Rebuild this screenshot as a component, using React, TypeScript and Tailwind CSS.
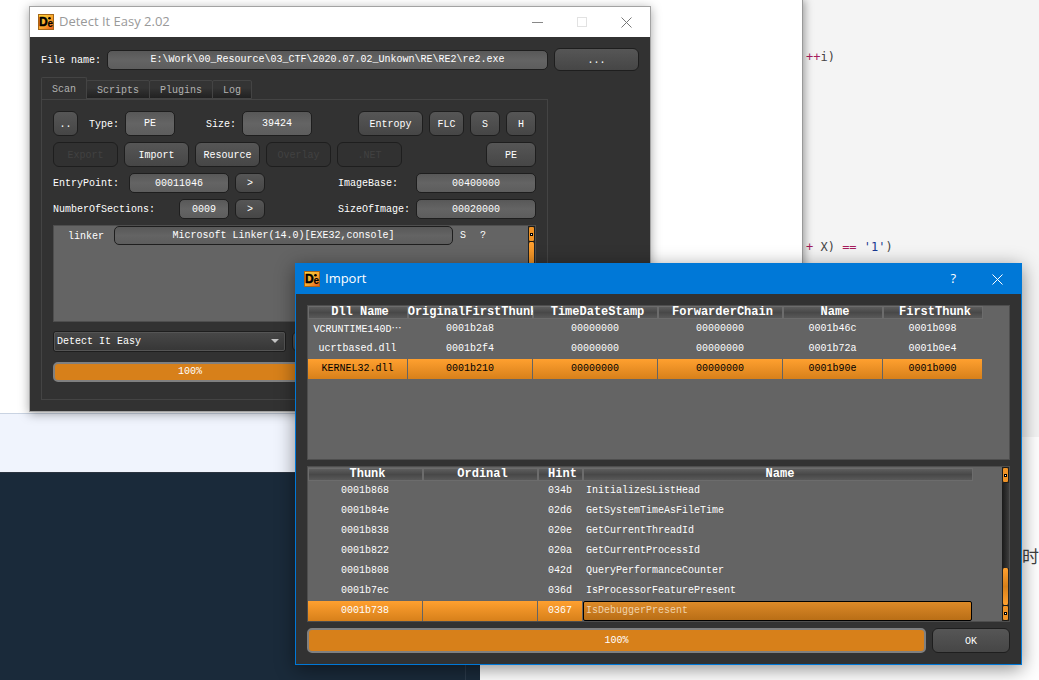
import React, { useState } from "react";
import { clsx } from "clsx";

const MONO = "font-['Liberation_Mono','Noto_Sans_CJK_SC',monospace]";
const SANS = "font-['Open_Sans','Noto_Sans',sans-serif]";

function Logo() {
  return (
    <svg width="16" height="16" viewBox="0 0 16 16" aria-hidden="true" className="shrink-0">
      <defs>
        <linearGradient id="logo-fill" x1="0" y1="0" x2="1" y2="1">
          <stop offset="0" stopColor="#ffd83a" />
          <stop offset="0.55" stopColor="#f9a62c" />
          <stop offset="1" stopColor="#e8551c" />
        </linearGradient>
      </defs>
      <rect x="0.5" y="0.5" width="15" height="15" fill="url(#logo-fill)" stroke="#a5671a" />
      <text x="0.9" y="12.4" fontFamily="Liberation Sans" fontWeight="700" fontSize="12" stroke="#000" strokeWidth="0.5">D</text>
      <text x="9.4" y="13.2" fontFamily="Liberation Sans" fontWeight="700" fontSize="10" stroke="#000" strokeWidth="0.1">e</text>
      <circle cx="11.5" cy="4.2" r="1.3" />
    </svg>
  );
}

function CloseGlyph({ className }: { className: string }) {
  return (
    <svg width="11" height="11" viewBox="0 0 11 11" className={className} aria-hidden="true">
      <path d="M0.5 0.5 10.5 10.5M10.5 0.5 0.5 10.5" stroke="currentColor" fill="none" />
    </svg>
  );
}

function Button({ className, children, ...rest }: React.ButtonHTMLAttributes<HTMLButtonElement>) {
  return (
    <button
      type="button"
      {...rest}
      className={clsx(
        "shrink-0 rounded-md border border-[#1e1e1e] pt-0.5 text-center whitespace-nowrap",
        rest.disabled ? "bg-[#313131] text-[#414141]" : "bg-linear-to-b from-[#565656] to-[#464646] text-white",
        className,
      )}
    >
      {children}
    </button>
  );
}

function Field({ id, label, value, labelClass, className }: { id: string; label: string; value: string; labelClass?: string; className: string }) {
  return (
    <>
      <label htmlFor={id} className={clsx("shrink-0 pt-0.5 whitespace-nowrap", labelClass)}>
        {label}
      </label>
      <input
        id={id}
        readOnly
        value={value}
        className={clsx(
          "min-w-0 rounded-[5px] border border-[#1e1e1e] bg-linear-to-b from-[#585858] via-[#646464] to-[#5d5d5d] text-center text-white outline-none",
          className,
        )}
      />
    </>
  );
}

function ScrollCap() {
  return (
    <button type="button" aria-label="Scroll" className="flex h-4 w-full shrink-0 items-center justify-center rounded-xs border border-[#1b1b19] bg-[#ef9226]">
      <span className="size-[3px] border border-black bg-white" />
    </button>
  );
}

function ScrollBar({ atEnd }: { atEnd?: boolean }) {
  return (
    <div className="flex w-[7px] shrink-0 flex-col bg-[#222222]">
      <ScrollCap />
      {atEnd && <div className="flex-1 bg-linear-to-r from-[#1a1a1a] to-[#3c3c3c]" />}
      <div
        className={clsx(
          "rounded-xs border-x border-[#222222] bg-linear-to-b from-[#ffa02f] via-[#d7801a] to-[#ffa02f]",
          atEnd ? "h-[37px]" : "flex-1",
        )}
      />
      <ScrollCap />
    </div>
  );
}

function Progress({ className }: { className: string }) {
  return (
    <div
      role="progressbar"
      aria-label="Progress"
      aria-valuenow={100}
      className={clsx("flex min-w-0 items-center justify-center rounded-[5px] border-2 border-[#808080] bg-[#d7801a] text-white", className)}
    >
      100%
    </div>
  );
}

const TABS = ["Scan", "Scripts", "Plugins", "Log"];

function MainWindow() {
  const [tab, setTab] = useState("Scan");
  return (
    <section className="absolute top-[6px] left-[29px] w-[622px] border border-[#a3a3a3] bg-[#323232] shadow-[0_2px_10px_rgba(0,0,0,0.35)]">
      <header className={clsx("flex h-[30px] items-center bg-white pr-[18px] pl-2 text-[13px] text-[#999999]", SANS)}>
        <Logo />
        <h1 className="ml-[5px] flex-1">Detect It Easy 2.02</h1>
        <div className="flex items-center gap-[34px]">
          <button type="button" aria-label="Minimize" className="flex size-[11px] items-center">
            <span className="h-px w-full bg-[#888888]" />
          </button>
          <button type="button" aria-label="Maximize" disabled className="size-[10px] border border-[#e2e2e2]" />
          <button type="button" aria-label="Close" className="size-[11px]">
            <CloseGlyph className="text-[#777777]" />
          </button>
        </div>
      </header>

      <div className={clsx("px-[11px] pt-[11px] pb-[11px] text-[10px] leading-3 text-white", MONO)}>
        <div className="flex items-center">
          <Field
            id="file"
            label="File name:"
            value={"E:\\Work\\00_Resource\\03_CTF\\2020.07.02_Unkown\\RE\\RE2\\re2.exe"}
            labelClass="w-[66px]"
            className="h-5 flex-1"
          />
          <Button className="ml-[6px] h-[23px] w-[85px]">...</Button>
        </div>

        <div role="tablist" className="mt-[6px] flex items-end text-[#b1b1b1]">
          {TABS.map((name) => (
            <button
              key={name}
              type="button"
              role="tab"
              aria-selected={tab === name}
              onClick={() => setTab(name)}
              className={clsx(
                "rounded-t-xs border border-[#444444] px-[10px] pt-0.5",
                tab === name ? "h-[22px] border-b-0 bg-[#323232]" : "-ml-px h-[19px] bg-linear-to-b from-[#343434] from-40% to-[#212121]",
              )}
            >
              {name}
            </button>
          ))}
        </div>

        <div className="mr-[91px] flex flex-col gap-[6px] border border-[#444444] px-[11px] pt-[11px] pb-[17px]">
          <div className="flex items-center">
            <Button className="h-[25px] w-[25px]">..</Button>
            <Field id="type" label="Type:" value="PE" labelClass="ml-[11px] w-9" className="h-[25px] w-[50px]" />
            <Field id="size" label="Size:" value="39424" labelClass="ml-[31px] w-9" className="h-[25px] w-[70px]" />
            <div className="ml-auto flex gap-[6px]">
              <Button className="h-[25px] w-[65px]">Entropy</Button>
              <Button className="h-[25px] w-[35px]">FLC</Button>
              <Button className="h-[25px] w-[30px]">S</Button>
              <Button className="h-[25px] w-[30px]">H</Button>
            </div>
          </div>
          <div className="flex items-center gap-[6px]">
            <Button disabled className="h-[25px] w-[65px]">Export</Button>
            <Button className="h-[25px] w-[65px]">Import</Button>
            <Button className="h-[25px] w-[65px]">Resource</Button>
            <Button disabled className="h-[25px] w-[65px]">Overlay</Button>
            <Button disabled className="h-[25px] w-[65px]">.NET</Button>
            <Button className="ml-auto h-[25px] w-[50px]">PE</Button>
          </div>
          <div className="flex items-center">
            <Field id="entry" label="EntryPoint:" value="00011046" labelClass="w-[76px]" className="h-5 w-[100px]" />
            <Button className="ml-[6px] h-5 w-[30px]">&gt;</Button>
            <Field id="base" label="ImageBase:" value="00400000" labelClass="ml-auto w-[78px]" className="h-5 w-[120px]" />
          </div>
          <div className="flex items-center">
            <Field id="sections" label="NumberOfSections:" value="0009" labelClass="w-[126px]" className="h-5 w-[50px]" />
            <Button className="ml-[6px] h-5 w-[30px]">&gt;</Button>
            <Field id="imgsize" label="SizeOfImage:" value="00020000" labelClass="ml-auto w-[78px]" className="h-5 w-[120px]" />
          </div>
          <div className="flex h-[97px] border border-[#4e4e4e] bg-[#646464]">
            <div className="flex flex-1 items-start pl-[14px]">
              <div className="flex flex-1 items-center">
                <Field id="linker" label="linker" value="Microsoft Linker(14.0)[EXE32,console]" labelClass="w-[46px]" className="h-[19px] w-[339px]" />
                <button type="button" className="ml-[6px] w-2">S</button>
                <button type="button" className="ml-3 w-2">?</button>
              </div>
            </div>
            <ScrollBar />
          </div>
          <div className="mt-[3px] flex gap-[6px]">
            <div className="relative w-[233px]">
              <select
                aria-label="Scan engine"
                className="h-[21px] w-full appearance-none rounded-[3px] border border-[#1e1e1e] bg-linear-to-b from-[#484848] to-[#363636] pl-[3px] text-white outline-1 -outline-offset-2 outline-[#555555]"
              >
                <option>Detect It Easy</option>
              </select>
              <svg width="8" height="4" viewBox="0 0 8 4" className="pointer-events-none absolute top-2 right-[7px]" aria-hidden="true">
                <path d="M0 0h8L4 4z" fill="#c4c4c4" />
              </svg>
            </div>
            <Button aria-label="Options" className="h-[21px] flex-1" />
          </div>
          <div className="mt-1 flex gap-[6px]">
            <Progress className="h-5 w-[274px]" />
            <Button aria-label="Start scan" className="h-5 flex-1" />
          </div>
        </div>
      </div>
    </section>
  );
}

const DLLS = [
  ["VCRUNTIME140D…", "0001b2a8", "00000000", "00000000", "0001b46c", "0001b098"],
  ["ucrtbased.dll", "0001b2f4", "00000000", "00000000", "0001b72a", "0001b0e4"],
  ["KERNEL32.dll", "0001b210", "00000000", "00000000", "0001b90e", "0001b000"],
];

const THUNKS = [
  ["0001b868", "", "034b", "InitializeSListHead"],
  ["0001b84e", "", "02d6", "GetSystemTimeAsFileTime"],
  ["0001b838", "", "020e", "GetCurrentThreadId"],
  ["0001b822", "", "020a", "GetCurrentProcessId"],
  ["0001b808", "", "042d", "QueryPerformanceCounter"],
  ["0001b7ec", "", "036d", "IsProcessorFeaturePresent"],
  ["0001b738", "", "0367", "IsDebuggerPresent"],
];

function HeadCell({ className, children }: { className: string; children: string }) {
  return (
    <th
      scope="col"
      className={clsx(
        "h-[13px] overflow-hidden bg-linear-to-b from-[#616161] via-[#484848] to-[#5c5c5c] p-0 text-[12px] leading-[13px] font-bold shadow-[inset_0_0_0_1px_#6c6c6c]",
        className,
      )}
    >
      <span className="-mx-4 flex justify-center pl-1">{children}</span>
    </th>
  );
}

function CellText({ text }: { text: string }) {
  if (!text.endsWith("…")) return <>{text}</>;
  return (
    <>
      {text.slice(0, -1)}
      <span lang="zh-CN" className="font-['Noto_Sans_CJK_SC',sans-serif]">…</span>
    </>
  );
}

const CELL = "h-5 overflow-hidden border-r border-[#646464] p-0 whitespace-nowrap";
const SELECTED = "bg-linear-to-b from-[#ffa02f] to-[#d7801a]";

function ImportWindow() {
  return (
    <section className="absolute top-[263px] left-[295px] w-[727px] border border-[#0078d7] bg-[#323232] shadow-[0_4px_18px_rgba(0,0,0,0.45)]">
      <header className={clsx("flex h-[30px] items-center bg-[#0078d7] pr-[18px] pl-2 text-[13px] text-white", SANS)}>
        <Logo />
        <h2 className="ml-[5px] flex-1">Import</h2>
        <button type="button" aria-label="Help" className="mr-9">?</button>
        <button type="button" aria-label="Close" className="size-[11px]">
          <CloseGlyph className="text-white" />
        </button>
      </header>

      <div className={clsx("flex flex-col gap-[6px] p-[11px] text-[10px] leading-3 text-white", MONO)}>
        <div className="h-[155px] overflow-hidden border border-[#4e4e4e] bg-[#646464]">
          <table className="w-[675px] table-fixed border-separate border-spacing-0 text-center">
            <thead>
              <tr>
                <HeadCell className="w-[100px]">Dll Name</HeadCell>
                <HeadCell className="w-[125px]">OriginalFirstThunk</HeadCell>
                <HeadCell className="w-[125px]">TimeDateStamp</HeadCell>
                <HeadCell className="w-[125px]">ForwarderChain</HeadCell>
                <HeadCell className="w-[100px]">Name</HeadCell>
                <HeadCell className="w-[100px]">FirstThunk</HeadCell>
              </tr>
            </thead>
            <tbody>
              {DLLS.map((row, r) => (
                <tr key={row[0]} className={r === 2 ? "text-black" : ""}>
                  {row.map((cell, c) => (
                    <td key={c} className={clsx(CELL, r === 2 && SELECTED)}>
                      <CellText text={cell} />
                    </td>
                  ))}
                </tr>
              ))}
            </tbody>
          </table>
        </div>

        <div className="flex justify-between border border-[#4e4e4e] bg-[#646464]">
          <table className="mt-px w-[665px] table-fixed border-separate border-spacing-0 text-center">
            <thead>
              <tr>
                <HeadCell className="w-[115px]">Thunk</HeadCell>
                <HeadCell className="w-[115px]">Ordinal</HeadCell>
                <HeadCell className="w-[45px]">Hint</HeadCell>
                <HeadCell className="w-[390px]">Name</HeadCell>
              </tr>
            </thead>
            <tbody>
              {THUNKS.map((row, r) => (
                <tr key={row[0]}>
                  {row.map((cell, c) => (
                    <td
                      key={c}
                      className={clsx(
                        CELL,
                        c === 3 && r < 6 && "pl-[3px] text-left",
                        r === 6 && c < 3 && SELECTED,
                        r === 6 && c === 3 && "text-left",
                      )}
                    >
                      {r === 6 && c === 3 ? (
                        <div className="rounded-xs border border-black bg-linear-to-b from-[#dc8a28] to-[#b96e16] py-[3px] pl-[2px] text-[#f0d3ac]">{cell}</div>
                      ) : (
                        cell
                      )}
                    </td>
                  ))}
                </tr>
              ))}
            </tbody>
          </table>
          <ScrollBar atEnd />
        </div>

        <div className="flex gap-[6px]">
          <Progress className="h-[25px] flex-1" />
          <Button className="h-[25px] w-[78px]">OK</Button>
        </div>
      </div>
    </section>
  );
}

export default function App() {
  return (
    <main className="relative flex h-screen min-h-[680px] overflow-hidden bg-white">
      <div className="z-10 flex w-[803px] shrink-0 flex-col">
        <div className="flex h-[472px] flex-col border-r border-[#999999] bg-white shadow-[2px_0_8px_rgba(0,0,0,0.35)]">
          <div className="h-[413px]" />
          <div className="flex-1 border-t border-[#c9d3e2] bg-[#f0f4fd]" />
        </div>
        <div className="z-10 flex w-[480px] flex-1 justify-end border-t border-[#2b3440] bg-[#1a2a3a]">
          <div className="w-[15px] border-l border-[#2b3a4a]" />
        </div>
      </div>
      <div className="flex flex-1 flex-col">
        <pre className="flex h-[437px] flex-col gap-[174px] bg-[#f4f4f4] pt-[49px] pl-[3px] text-[12px] leading-4 text-[#444444]">
          <code className="font-['DejaVu_Sans_Mono',monospace]">
            <span className="text-[#a71d5d]">++</span>i)
          </code>
          <code className="font-['DejaVu_Sans_Mono',monospace]">
            <span className="text-[#a71d5d]">+</span> X) <span className="text-[#a71d5d]">==</span> <span className="text-[#183691]">'1'</span>)
          </code>
        </pre>
        <p className="pt-[107px] text-right font-['Noto_Sans_CJK_SC',sans-serif] text-[17px] leading-6 text-[#404040]">时</p>
      </div>
      <div className="absolute inset-0 z-20">
        <MainWindow />
        <ImportWindow />
      </div>
    </main>
  );
}
